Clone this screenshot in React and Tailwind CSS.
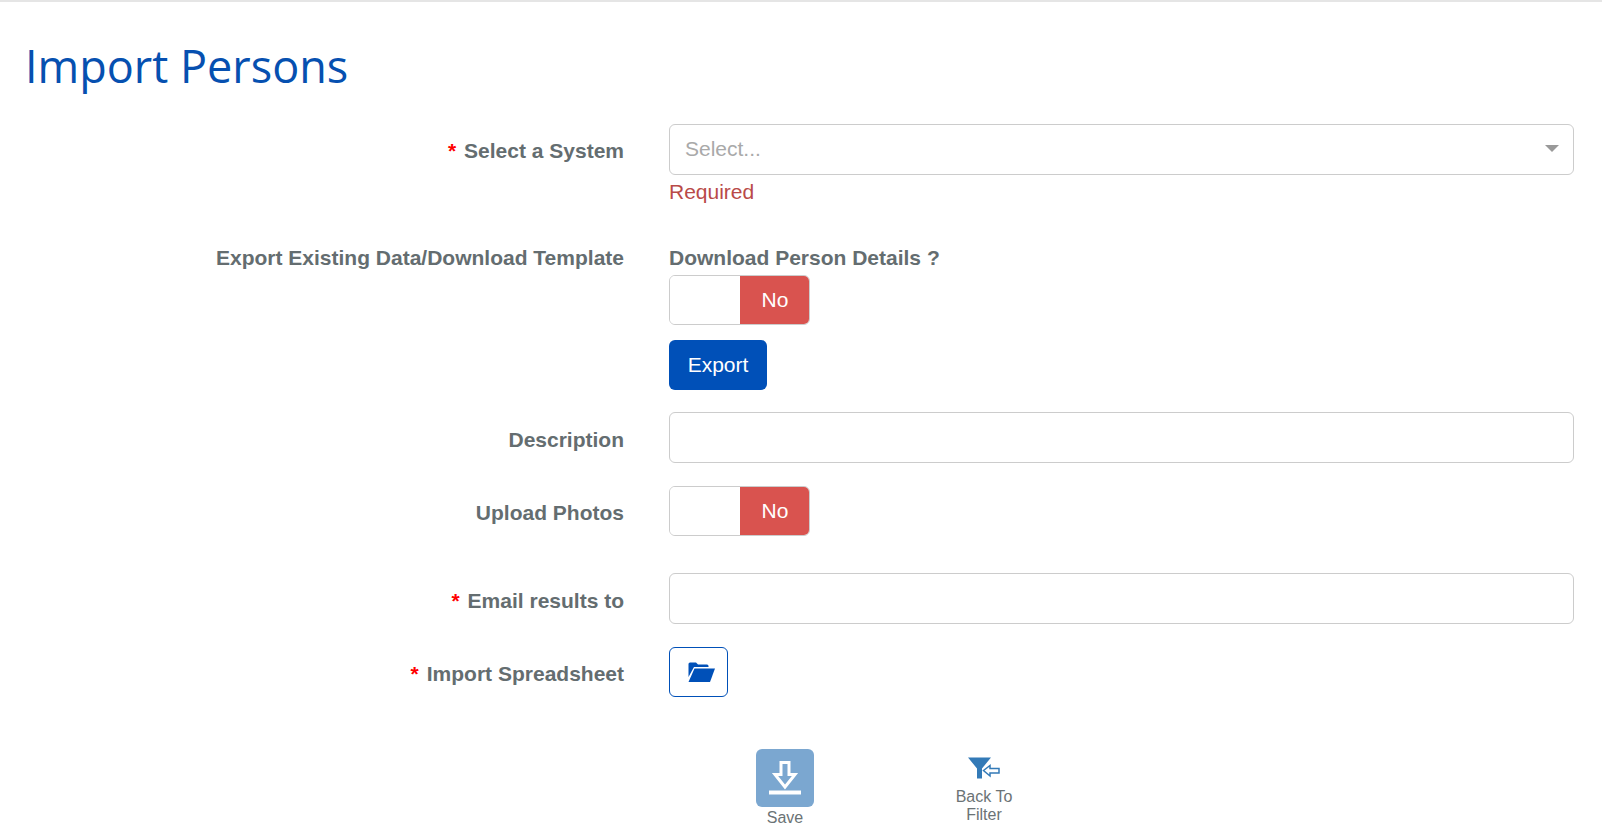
import React from "react";

const sans = "font-['Liberation_Sans',Arial,sans-serif]";

function Row({ label, required, className, labelClass, children }) {
  return (
    <div className={`flex ${className || ""}`}>
      <label className={`w-[624px] shrink-0 text-right text-[21px] font-bold leading-[30px] text-[#646d70] ${labelClass || ""}`}>
        {required && <span className="mr-[8px] text-[#ff0000]">*</span>}
        {label}
      </label>
      <div className="ml-[45px] flex-1">{children}</div>
    </div>
  );
}

function Toggle() {
  return (
    <div className="flex h-[50px] w-[141px] overflow-hidden rounded-[6px] border border-[#cccccc]">
      <div className="w-[70px] bg-white" />
      <div className="flex flex-1 items-center justify-center bg-[#d9534f] pl-[1px] text-[21px] text-white">No</div>
    </div>
  );
}

function TextInput() {
  return <div className="h-[51px] rounded-[6px] border border-[#cccccc] bg-white" />;
}

export default function App() {
  return (
    <div className={`h-[830px] overflow-hidden border-t-2 border-[#e5e5e5] bg-white ${sans}`}>
      <h1 className="ml-[25px] mt-[34px] font-['Open_Sans',sans-serif] text-[45px] font-normal leading-[60px] text-[#0650b0]">
        Import Persons
      </h1>
      <div className="mr-[28px] mt-[28px]">
        <Row label="Select a System" required labelClass="pt-[12px]">
          <div className="flex h-[51px] items-center justify-between rounded-[6px] border border-[#cccccc] bg-white pb-[2px] pl-[15px] pr-[14px]">
            <span className="text-[21px] text-[#a9a9a9]">Select...</span>
            <span className="h-0 w-0 border-x-[7px] border-t-[7px] border-x-transparent border-t-[#999999]" />
          </div>
          <div className="mt-[2px] text-[21px] leading-[30px] text-[#b94a48]">Required</div>
        </Row>

        <Row label="Export Existing Data/Download Template" className="mt-[36px]">
          <div className="text-[21px] font-bold leading-[30px] text-[#646d70]">Download Person Details ?</div>
          <div className="mt-[2px]">
            <Toggle />
          </div>
          <button className="mt-[15px] h-[50px] w-[98px] rounded-[6px] bg-[#0050b8] text-[21px] text-white">Export</button>
        </Row>

        <Row label="Description" className="mt-[22px]" labelClass="pt-[13px]">
          <TextInput />
        </Row>

        <Row label="Upload Photos" className="mt-[23px]" labelClass="pt-[12px]">
          <Toggle />
        </Row>

        <Row label="Email results to" required className="mt-[37px]" labelClass="pt-[13px]">
          <TextInput />
        </Row>

        <Row label="Import Spreadsheet" required className="mt-[23px]" labelClass="pt-[12px]">
          <button className="flex h-[50px] w-[59px] items-center justify-center rounded-[6px] border border-[#0050b8] bg-white pl-[5px]">
            <svg width="27" height="20" viewBox="0 0 27 20" fill="#0050b8">
              <path d="M0.5 2 Q0.5 0.5 2 0.5 H8 L10 2.5 H19 Q20.5 2.5 20.5 4 V5 H6 L0.5 15 Z" />
              <path d="M6.5 6.5 H27 L22 20 H0.5 Z" />
            </svg>
          </button>
        </Row>

        <div className="mt-[52px] flex items-start pl-[756px]">
          <div className="flex w-[58px] flex-col items-center">
            <div className="flex h-[58px] w-[58px] items-center justify-center rounded-[6px] bg-[#7ba7d0]">
              <svg width="34" height="34" viewBox="0 0 34 34" fill="none" stroke="white">
                <path d="M13 1.5 H21 V13.5 H27 L17 26 L7 13.5 H13 Z" strokeWidth="3" />
                <path d="M1 31.5 H33" strokeWidth="4" />
              </svg>
            </div>
            <span className="mt-[2px] text-[16px] leading-[18px] text-[#6b7375]">Save</span>
          </div>
          <div className="ml-[134px] flex w-[72px] flex-col items-center pt-[8px]">
            <svg width="32" height="23" viewBox="0 0 32 22">
              <path d="M0 0 H23 L14 11 V21 L9 21 V11 Z" fill="#337ab7" />
              <path d="M15.5 13 L22 8 V11 H31 V15.5 H22 V18.5 Z" fill="white" stroke="#337ab7" strokeWidth="1.5" />
            </svg>
            <span className="mt-[8px] text-center text-[16px] leading-[18px] text-[#6b7375]">Back To Filter</span>
          </div>
        </div>
      </div>
    </div>
  );
}
